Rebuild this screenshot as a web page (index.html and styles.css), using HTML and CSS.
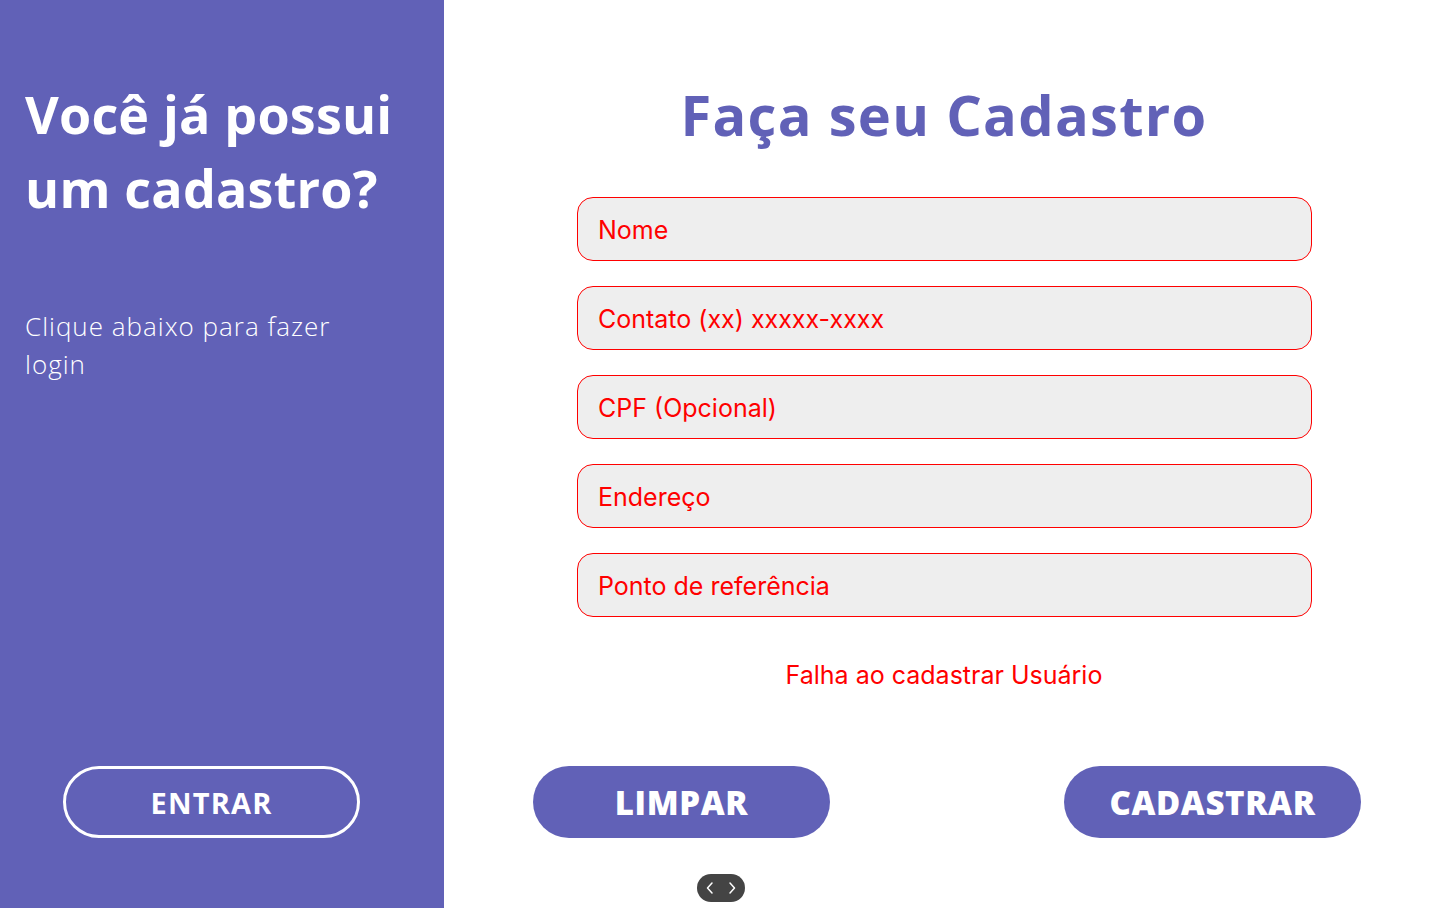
FILE: index.html
```html
<!DOCTYPE html>
<html lang="pt-BR">
<head>
<meta charset="utf-8">
<title>Cadastro</title>
<link rel="stylesheet" href="styles.css">
</head>
<body>
<div class="page">
  <aside class="side">
    <h2 class="side-title">Você já possui um cadastro?</h2>
    <p class="side-text">Clique abaixo para fazer login</p>
    <button class="btn-outline">ENTRAR</button>
  </aside>
  <main class="main">
    <h1 class="title">Faça seu Cadastro</h1>
    <form class="form">
      <div class="field">Nome</div>
      <div class="field">Contato (xx) xxxxx-xxxx</div>
      <div class="field">CPF (Opcional)</div>
      <div class="field">Endereço</div>
      <div class="field">Ponto de referência</div>
    </form>
    <p class="error">Falha ao cadastrar Usuário</p>
    <div class="actions">
      <button class="btn">LIMPAR</button>
      <button class="btn">CADASTRAR</button>
    </div>
    <div class="pager">
      <svg width="48" height="28" viewBox="0 0 48 28">
        <path d="M15 9 L10.5 14 L15 19" fill="none" stroke="#fff" stroke-width="1.5" stroke-linecap="round" stroke-linejoin="round"/>
        <path d="M33 9 L37.5 14 L33 19" fill="none" stroke="#fff" stroke-width="1.5" stroke-linecap="round" stroke-linejoin="round"/>
      </svg>
    </div>
  </main>
</div>
</body>
</html>
```
FILE: styles.css
```css
* { box-sizing: border-box; }
html, body { margin: 0; padding: 0; height: 100%; }
body { background: #fff; overflow: hidden; }
.page { display: flex; width: 1437px; height: 908px; }
.side {
  width: 444px;
  flex: none;
  background: #6161b7;
  padding: 0 25px;
  display: flex;
  flex-direction: column;
  color: #fff;
  font-family: "Open Sans", sans-serif;
}
.side-title {
  margin: 77px 0 0;
  font-size: 52px;
  font-weight: 700;
  line-height: 74px;
  letter-spacing: 0.2px;
}
.side-text {
  margin: 82px 0 0;
  font-size: 26px;
  font-weight: 300;
  line-height: 38px;
  letter-spacing: 1px;
  width: 340px;
}
.btn-outline {
  margin: auto 0 70px 38px;
  width: 297px;
  height: 72px;
  border: 3px solid #fff;
  border-radius: 36px;
  background: transparent;
  color: #fff;
  font-family: "Open Sans", sans-serif;
  font-weight: 700;
  font-size: 29px;
  letter-spacing: 1.2px;
}
.main {
  flex: 1;
  display: flex;
  flex-direction: column;
  align-items: center;
  position: relative;
  font-family: Inter, sans-serif;
}
.title {
  margin: 77px 0 0;
  color: #6161b7;
  font-family: "Open Sans", sans-serif;
  font-size: 56px;
  font-weight: 700;
  line-height: 74px;
  letter-spacing: 1.3px;
  padding-left: 7px;
}
.form {
  margin: 46px 0 0 8px;
  display: flex;
  flex-direction: column;
  gap: 25px;
}
.field {
  width: 735px;
  height: 64px;
  border: 1px solid #ff0000;
  border-radius: 16px;
  background: #eeeeee;
  color: #ff0000;
  font-size: 25px;
  padding: 2px 0 0 20px;
  display: flex;
  align-items: center;
}
.error {
  margin: 43px 0 0 7px;
  color: #ff0000;
  font-size: 25px;
  line-height: 30px;
}
.actions {
  margin: 76px 0 0 13px;
  width: 828px;
  display: flex;
  justify-content: space-between;
}
.btn {
  width: 297px;
  height: 72px;
  border: none;
  border-radius: 36px;
  background: #6161b7;
  color: #fff;
  font-family: "Open Sans", sans-serif;
  font-weight: 800;
  font-size: 33px;
  letter-spacing: 0.6px;
}
.pager {
  position: absolute;
  left: 253px;
  top: 874px;
  width: 48px;
  height: 28px;
  border-radius: 14px;
  background: #444;
  display: flex;
}
```
